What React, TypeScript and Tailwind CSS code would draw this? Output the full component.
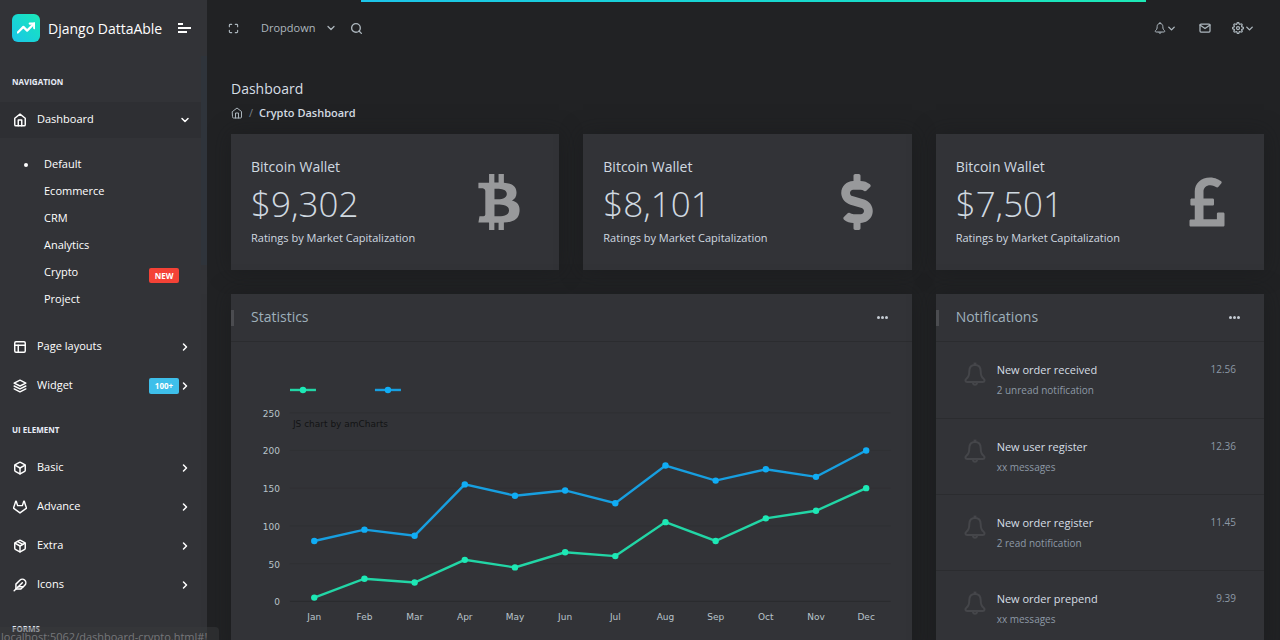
import type { ReactNode } from 'react';
import {
  FiBox,
  FiChevronDown,
  FiChevronRight,
  FiFeather,
  FiGitlab,
  FiHome,
  FiLayers,
  FiLayout,
  FiMail,
  FiMaximize,
  FiPackage,
  FiSearch,
  FiSettings,
  FiTrendingUp,
} from 'react-icons/fi';
import { FaBtc, FaDollarSign, FaPoundSign } from 'react-icons/fa';

function BellIcon({ className }: { className: string }) {
  return (
    <svg viewBox="0 0 24 24" fill="none" stroke="currentColor" strokeWidth="2" strokeLinejoin="round" className={className} aria-hidden="true">
      <path d="M12 3c-3.700 0-5.700 2.600-5.700 6.200 0 4.400-.8 6-2.900 7.500-1.600 1.200-1.200 3.300.8 3.300h15.600c2 0 2.400-2.100.8-3.300-2.100-1.500-2.900-3.100-2.900-7.500C17.700 5.600 15.700 3 12 3z" />
      <path d="M12 3V.6" strokeWidth="2.800" />
      <path d="M9.900 20.600c.2 1.400 1 2.200 2.100 2.200s1.900-.8 2.100-2.200" />
    </svg>
  );
}

const subItems = ['Default', 'Ecommerce', 'CRM', 'Analytics', 'Crypto', 'Project'];

function Caption({ children }: { children: ReactNode }) {
  return <h2 className="px-3 pt-[17px] pb-[10px] text-[8px] leading-4 font-bold text-[#e8edf7]">{children}</h2>;
}

function NavItem({ icon, label, badge, open }: { icon: ReactNode; label: string; badge?: string; open?: boolean }) {
  return (
    <div className="flex h-[39px] items-center">
      <a href="#!" className={`flex h-9 w-full items-center pr-4 pl-[13px] text-[11px] font-medium text-white ${open ? 'bg-[#2e2f33]' : ''}`}>
        <span className="flex w-6 shrink-0 text-[14px]">{icon}</span>
        <span className="flex-1">{label}</span>
        {badge && <span className="flex h-4 w-[30px] items-center justify-center rounded-xs bg-[#3ebfea] text-[8px] font-bold">{badge}</span>}
        <span className="flex w-3 justify-center text-[12px]">
          {open ? <FiChevronDown strokeWidth={3} /> : <FiChevronRight strokeWidth={3} />}
        </span>
      </a>
    </div>
  );
}

function Sidebar() {
  return (
    <aside className="flex w-[207px] shrink-0 flex-col bg-[#323337]">
      <div className="flex h-14 shrink-0 items-center pr-4 pl-3">
        <span className="flex size-7 items-center justify-center rounded-md bg-linear-to-tr from-[#1dc4e9] to-[#1de9b6] text-[18px] text-white">
          <FiTrendingUp strokeWidth={3} />
        </span>
        <span className="ml-2 flex-1 text-[14px] whitespace-nowrap text-white">Django DattaAble</span>
        <button type="button" aria-label="Toggle menu" className="flex w-[13px] flex-col gap-[2px]">
          <span className="h-[2px] w-[5px] bg-white" />
          <span className="h-[2px] w-[13px] bg-white" />
          <span className="h-[2px] w-[9px] bg-white" />
        </button>
      </div>
      <nav className="relative pt-px">
        <div className="absolute top-0 right-0 h-[209px] w-[6px] bg-[#2f343b]" />
        <Caption>NAVIGATION</Caption>
        <NavItem icon={<FiHome strokeWidth={2.5} />} label="Dashboard" open />
        <ul className="pt-3 pb-[14px]">
          {subItems.map((item, i) => (
            <li key={item}>
              <a href="#!" className="flex h-[27px] items-center pr-7 text-[11px] font-medium text-white">
                <span className="flex w-11 shrink-0 pl-6">{i === 0 && <span className="size-1 rounded-full bg-white" />}</span>
                <span className="flex-1">{item}</span>
                {item === 'Crypto' && (
                  <span className="mt-[6px] flex h-[15px] w-[30px] items-center justify-center rounded-xs bg-[#f44236] text-[8px] font-bold">NEW</span>
                )}
              </a>
            </li>
          ))}
        </ul>
        <NavItem icon={<FiLayout strokeWidth={2.5} />} label="Page layouts" />
        <NavItem icon={<FiLayers strokeWidth={2.5} />} label="Widget" badge="100+" />
        <Caption>UI ELEMENT</Caption>
        <NavItem icon={<FiBox strokeWidth={2.5} />} label="Basic" />
        <NavItem icon={<FiGitlab strokeWidth={2.5} />} label="Advance" />
        <NavItem icon={<FiPackage strokeWidth={2.5} />} label="Extra" />
        <NavItem icon={<FiFeather strokeWidth={2.5} />} label="Icons" />
        <Caption>FORMS</Caption>
      </nav>
    </aside>
  );
}

function Topbar() {
  return (
    <header className="flex h-14 shrink-0 items-center pr-[25px] pl-[21px] text-[11px] text-[#adb7be]">
      <button type="button" aria-label="Full screen">
        <FiMaximize strokeWidth={2.5} />
      </button>
      <button type="button" className="ml-[22px] flex items-center gap-[10px]">
        Dropdown
        <FiChevronDown strokeWidth={2.5} className="size-3" />
      </button>
      <button type="button" aria-label="Search" className="ml-[13px] text-[13px]">
        <FiSearch strokeWidth={2.5} />
      </button>
      <div className="ml-auto flex items-center">
        <button type="button" aria-label="Notifications" className="flex items-center">
          <BellIcon className="size-3" />
          <FiChevronDown strokeWidth={3} />
        </button>
        <button type="button" aria-label="Messages" className="ml-[22px]">
          <FiMail strokeWidth={2.5} className="size-3" />
        </button>
        <button type="button" aria-label="Settings" className="ml-[21px] flex items-center">
          <FiSettings strokeWidth={2.5} className="size-3" />
          <FiChevronDown strokeWidth={3} />
        </button>
      </div>
    </header>
  );
}

const cardClass = 'bg-[#323337] shadow-[0_0_20px_0_rgba(24,25,27,0.5)]';

function WalletCard({ value, icon }: { value: string; icon: ReactNode }) {
  return (
    <section className={`flex h-[136px] items-center justify-between pr-[39px] pl-5 ${cardClass}`}>
      <div className="pb-px">
        <h2 className="text-[14px] leading-5 text-[#d0d9e0]">Bitcoin Wallet</h2>
        <p className="text-[35px] leading-[53px] font-light text-[#d0d9e0]">{value}</p>
        <p className="text-[11px] leading-4 text-[#d0d9e0]">Ratings by Market Capitalization</p>
      </div>
      <div className="text-[#98999b]">{icon}</div>
    </section>
  );
}

function CardHeader({ title }: { title: string }) {
  return (
    <div className="flex h-12 items-center border-b border-[#2b2c2f]">
      <span className="h-4 w-[3px] bg-[#4b4c50]" />
      <h2 className="ml-[17px] flex-1 pb-[2px] text-[14px] text-[#9fb0bb]">{title}</h2>
      <button type="button" aria-label={`${title} options`} className="mr-6 flex gap-px">
        <span className="size-[3px] rounded-full bg-[#c5ccd3]" />
        <span className="size-[3px] rounded-full bg-[#c5ccd3]" />
        <span className="size-[3px] rounded-full bg-[#c5ccd3]" />
      </button>
    </div>
  );
}

const months = ['Jan', 'Feb', 'Mar', 'Apr', 'May', 'Jun', 'Jul', 'Aug', 'Sep', 'Oct', 'Nov', 'Dec'];
const ticks = [0, 50, 100, 150, 200, 250];
const series = [
  { color: '#1de9b6', line: '#22d6a6', legendX: 59, values: [5, 30, 25, 55, 45, 65, 60, 105, 80, 110, 120, 150] },
  { color: '#10adf5', line: '#179fe0', legendX: 144, values: [80, 95, 87, 155, 140, 147, 130, 180, 160, 175, 165, 200] },
];
const px = (i: number) => 83.3 + i * 50.2;
const py = (v: number) => 259.5 - v * 0.755;

function Chart() {
  return (
    <svg viewBox="0 0 681 310" className="block w-full text-[9px]" role="img" aria-label="Monthly statistics">
      {ticks.map((t) => (
        <g key={t}>
          <line x1="59" x2="660" y1={py(t)} y2={py(t)} stroke={t === 0 ? '#292a2d' : '#2f3033'} />
          <text x="49" y={py(t) + 4} textAnchor="end" fill="#b9c3ca" fontFamily="DejaVu Sans, sans-serif">{t}</text>
        </g>
      ))}
      {months.map((m, i) => (
        <text key={m} x={px(i)} y="278" textAnchor="middle" fill="#b9c3ca" fontFamily="DejaVu Sans, sans-serif">{m}</text>
      ))}
      <text x="62" y="85" fill="#121315" fontFamily="DejaVu Sans, sans-serif">JS chart by amCharts</text>
      {series.map((s) => (
        <g key={s.color}>
          <path d={`M${s.legendX} 48h26`} stroke={s.line} strokeWidth="2.4" />
          <circle cx={s.legendX + 13} cy="48" r="3.2" fill={s.color} />
          <polyline points={s.values.map((v, i) => `${px(i)},${py(v)}`).join(' ')} fill="none" stroke={s.line} strokeWidth="2.4" />
          {s.values.map((v, i) => (
            <circle key={i} cx={px(i)} cy={py(v)} r="3.2" fill={s.color} />
          ))}
        </g>
      ))}
    </svg>
  );
}

const notifications = [
  { title: 'New order received', note: '2 unread notification', time: '12.56' },
  { title: 'New user register', note: 'xx messages', time: '12.36' },
  { title: 'New order register', note: '2 read notification', time: '11.45' },
  { title: 'New order prepend', note: 'xx messages', time: '9.39' },
];

export default function App() {
  return (
    <div className="relative flex h-screen overflow-hidden bg-[#212224] font-['Open_Sans','Noto_Sans',sans-serif]">
      <div className="absolute top-0 left-[361px] h-[2px] w-[785px] bg-linear-to-r from-[#1dc4e9] to-[#1de9b6]" />
      <Sidebar />
      <div className="flex min-w-0 flex-1 flex-col">
        <Topbar />
        <main className="pr-4 pl-6">
          <h1 className="mt-[23px] text-[14px] leading-5 text-[#d6dee5]">Dashboard</h1>
          <nav aria-label="Breadcrumb" className="mt-[6px] flex h-4 items-center text-[11px] text-[#d6dee5]">
            <a href="#!" aria-label="Home" className="text-[12px] text-[#adb7be]">
              <FiHome />
            </a>
            <span className="w-4 text-center text-[#7a8188]">/</span>
            <span className="font-semibold">Crypto Dashboard</span>
          </nav>
          <div className="mt-[13px] grid grid-cols-3 gap-6">
            <WalletCard value="$9,302" icon={<FaBtc className="h-14 w-[42px]" />} />
            <WalletCard value="$8,101" icon={<FaDollarSign className="h-14 w-8" />} />
            <WalletCard value="$7,501" icon={<FaPoundSign className="h-14 w-9" />} />
            <section className={`col-span-2 ${cardClass}`}>
              <CardHeader title="Statistics" />
              <Chart />
            </section>
            <section className={cardClass}>
              <CardHeader title="Notifications" />
              <ul>
                {notifications.map((n) => (
                  <li key={n.title} className="flex h-[76px] border-b border-[#2b2c2f] px-7 pt-[18px] first:h-[77px]">
                    <BellIcon className="mt-[2px] -ml-px size-6 shrink-0 text-[#45464a]" />
                    <div className="ml-[10px] flex-1 leading-5">
                      <h3 className="text-[11px] text-[#d6dee5]">{n.title}</h3>
                      <p className="text-[10px] text-[#8d99a6]">{n.note}</p>
                    </div>
                    <span className="text-[10px] leading-[18px] text-[#8d99a6]">{n.time}</span>
                  </li>
                ))}
              </ul>
            </section>
          </div>
        </main>
      </div>
      <div className="absolute bottom-0 left-0 h-[13px] w-[219px] rounded-tr bg-[#38393c]/50 pl-px text-[11px] leading-5 whitespace-nowrap text-[#76777a]">
        localhost:5062/dashboard-crypto.html#!
      </div>
    </div>
  );
}
